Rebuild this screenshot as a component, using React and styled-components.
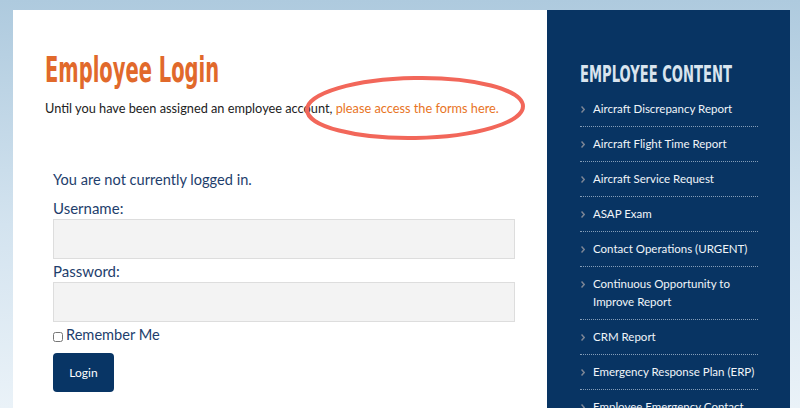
import React from 'react';
import styled, { createGlobalStyle } from 'styled-components';

const GlobalStyle = createGlobalStyle`
  html, body {
    margin: 0;
    padding: 0;
    height: 100%;
    overflow: hidden;
  }
  body {
    background: linear-gradient(to bottom, #aecade 0%, #d3e3ef 55%, #eaf2f8 100%);
    font-family: Lato, "Open Sans", sans-serif;
  }
`;

const Page = styled.div`
  display: flex;
  padding: 10px 10px 0 13px;
  height: 408px;
  box-sizing: border-box;
  overflow: hidden;
`;

const MainPanel = styled.main`
  position: relative;
  width: 534px;
  background: #ffffff;
  padding: 40px 32px 0 32px;
  box-sizing: border-box;
`;

// narrow display face: the condensed family is squeezed further to match
const Title = styled.h1`
  margin: 0;
  display: inline-block;
  font-family: "DejaVu Sans Condensed", "DejaVu Sans", sans-serif;
  font-weight: 700;
  font-size: 35px;
  line-height: 40px;
  white-space: nowrap;
  color: #e1692b;
  transform: scaleX(${(p) => p.$squeeze});
  transform-origin: left center;
`;

const Intro = styled.p`
  margin: 8px 0 0 0;
  font-size: 12.75px;
  line-height: 20px;
  color: #222222;
`;

const Link = styled.a`
  color: #e8741f;
  text-decoration: none;
`;

const Circle = styled.svg`
  position: absolute;
  left: 284px;
  top: 57px;
  pointer-events: none;
`;

const LoginForm = styled.form`
  margin: 51px 0 0 8px;
  display: flex;
  flex-direction: column;
  color: #1e3e6c;
`;

const Status = styled.p`
  margin: 0 0 6px 0;
  font-size: 14.6px;
  line-height: 22px;
`;

const Label = styled.label`
  font-size: 15px;
  line-height: 22px;
`;

const Field = styled.input`
  width: 462px;
  height: 40px;
  box-sizing: border-box;
  background: #f3f3f3;
  border: 1px solid #dddddd;
  margin: 0 0 1px 0;
`;

const RememberRow = styled.label`
  display: flex;
  align-items: center;
  gap: 3px;
  font-size: 14.6px;
  line-height: 22px;
  margin-top: 1px;
`;

const Check = styled.input`
  margin: 4px 0 0 0;
  width: 10px;
  height: 10px;
`;

const Button = styled.button`
  margin-top: 7px;
  width: 61px;
  height: 39px;
  border: none;
  border-radius: 4px;
  background: #083565;
  color: #ffffff;
  font-family: Lato, sans-serif;
  font-size: 12px;
`;

const Sidebar = styled.aside`
  width: 243px;
  background: #083463;
  padding: 50px 32px 0 33px;
  box-sizing: border-box;
`;

const SideTitle = styled(Title).attrs({ as: 'h2' })`
  display: block;
  font-size: 23px;
  line-height: 28px;
  color: #d9e4ee;
`;

const Menu = styled.ul`
  list-style: none;
  margin: 4px 0 0 0;
  padding: 0;
`;

const MenuItem = styled.li`
  display: flex;
  padding: 8px 0;
  border-bottom: 1px dotted rgba(200, 214, 230, 0.65);
  font-size: 11.5px;
  line-height: 18px;
  color: #f1f5f9;
`;

const Chevron = styled.svg`
  flex: 0 0 auto;
  margin: 6px 8px 0 1px;
`;

const items = [
  'Aircraft Discrepancy Report',
  'Aircraft Flight Time Report',
  'Aircraft Service Request',
  'ASAP Exam',
  'Contact Operations (URGENT)',
  'Continuous Opportunity to Improve Report',
  'CRM Report',
  'Emergency Response Plan (ERP)',
  'Employee Emergency Contact',
];

export default function App() {
  return (
    <>
      <GlobalStyle />
      <Page>
        <MainPanel>
          <Title $squeeze={0.62}>Employee Login</Title>
          <Intro>
            Until you have been assigned an employee account,{' '}
            <Link href="#">please access the forms here.</Link>
          </Intro>
          <Circle width="236" height="80" viewBox="0 0 236 80">
            <ellipse
              cx="118"
              cy="41"
              rx="108"
              ry="30"
              fill="none"
              stroke="#f2675a"
              strokeWidth="4"
              transform="rotate(-1 118 41)"
            />
          </Circle>
          <LoginForm onSubmit={(e) => e.preventDefault()}>
            <Status>You are not currently logged in.</Status>
            <Label>Username:</Label>
            <Field type="text" />
            <Label>Password:</Label>
            <Field type="password" />
            <RememberRow>
              <Check type="checkbox" />
              Remember Me
            </RememberRow>
            <Button type="submit">Login</Button>
          </LoginForm>
        </MainPanel>
        <Sidebar>
          <SideTitle $squeeze={0.635}>EMPLOYEE CONTENT</SideTitle>
          <Menu>
            {items.map((item) => (
              <MenuItem key={item}>
                <Chevron width="4" height="7" viewBox="0 0 4 7">
                  <polyline
                    points="0.5,0.5 3.2,3.5 0.5,6.5"
                    fill="none"
                    stroke="#7e8796"
                    strokeWidth="1.5"
                  />
                </Chevron>
                <span>{item}</span>
              </MenuItem>
            ))}
          </Menu>
        </Sidebar>
      </Page>
    </>
  );
}
